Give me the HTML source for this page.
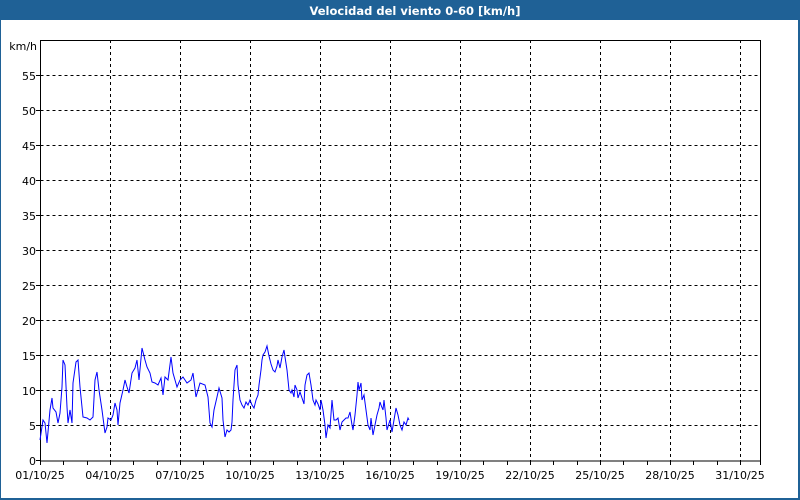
<!DOCTYPE html>
<html><head><style>
html,body{margin:0;padding:0;width:800px;height:500px;overflow:hidden;background:#fff}
svg{display:block}
text{font-family:"DejaVu Sans","Liberation Sans",sans-serif;font-size:11px;fill:#000}
</style></head><body>
<svg width="800" height="500" viewBox="0 0 800 500" xmlns="http://www.w3.org/2000/svg">
<rect x="0" y="0" width="800" height="500" fill="#1f6196"/>
<rect x="1" y="20" width="797" height="478" fill="#fff"/>
<text x="415" y="15" text-anchor="middle" style="font-weight:bold;fill:#fff;font-size:11.5px">Velocidad del viento 0-60 [km/h]</text>
<g stroke="#000" stroke-width="1" stroke-dasharray="3,3" fill="none" shape-rendering="crispEdges">
<path d="M40.5 75.5H760M40.5 110.5H760M40.5 145.5H760M40.5 180.5H760M40.5 215.5H760M40.5 250.5H760M40.5 285.5H760M40.5 320.5H760M40.5 355.5H760M40.5 390.5H760M40.5 425.5H760"/>
<path d="M110.5 40V461M180.5 40V461M250.5 40V461M320.5 40V461M390.5 40V461M460.5 40V461M530.5 40V461M600.5 40V461M670.5 40V461M740.5 40V461"/>
</g>
<rect x="40.5" y="40.5" width="720" height="420.5" fill="none" stroke="#000" stroke-width="1" shape-rendering="crispEdges"/>
<g stroke="#000" shape-rendering="crispEdges">
<path d="M40.5 461v4M63.5 461v4M87.5 461v4M110.5 461v4M133.5 461v4M157.5 461v4M180.5 461v4M203.5 461v4M227.5 461v4M250.5 461v4M273.5 461v4M297.5 461v4M320.5 461v4M343.5 461v4M367.5 461v4M390.5 461v4M413.5 461v4M437.5 461v4M460.5 461v4M483.5 461v4M507.5 461v4M530.5 461v4M553.5 461v4M577.5 461v4M600.5 461v4M623.5 461v4M647.5 461v4M670.5 461v4M693.5 461v4M717.5 461v4M740.5 461v4M760.5 461v4"/>
<path d="M36 75.5h4M36 110.5h4M36 145.5h4M36 180.5h4M36 215.5h4M36 250.5h4M36 285.5h4M36 320.5h4M36 355.5h4M36 390.5h4M36 425.5h4M36 460.5h4"/>
</g>
<g text-anchor="end">
<text x="37" y="50">km/h</text>
<text x="36" y="80">55</text><text x="36" y="115">50</text><text x="36" y="150">45</text>
<text x="36" y="185">40</text><text x="36" y="220">35</text><text x="36" y="255">30</text>
<text x="36" y="290">25</text><text x="36" y="325">20</text><text x="36" y="360">15</text>
<text x="36" y="395">10</text><text x="36" y="430">5</text><text x="36" y="465">0</text>
</g>
<g text-anchor="middle">
<text x="40" y="479">01/10/25</text><text x="110" y="479">04/10/25</text><text x="180" y="479">07/10/25</text>
<text x="250" y="479">10/10/25</text><text x="320" y="479">13/10/25</text><text x="390" y="479">16/10/25</text>
<text x="460" y="479">19/10/25</text><text x="530" y="479">22/10/25</text><text x="600" y="479">25/10/25</text>
<text x="670" y="479">28/10/25</text><text x="740" y="479">31/10/25</text>
</g>
<polyline fill="none" stroke="#0000ff" stroke-width="1" points="40,440 43,420 45,423 47,443 50,410 52,398 53,408 56,412 58,423 60,413 62,387 63,360 65,365 67,407 68,423 70,410 72,423 73,383 76,362 78,360 80,387 83,417 87,418 90,420 93,417 95,380 97,372 99,390 102,410 105,433 107,427 108,418 111,420 113,415 115,403 117,410 118,425 120,403 123,390 125,380 127,387 129,393 132,373 135,368 137,360 139,380 142,348 145,360 147,367 150,373 152,382 155,383 158,385 161,378 163,395 165,377 168,380 171,357 173,373 177,387 180,380 183,377 187,383 191,380 193,373 196,397 198,390 200,383 205,385 208,397 210,423 212,427 214,410 217,397 219,388 222,398 223,420 225,437 227,430 229,432 231,430 232,422 233,400 235,370 237,365 238,385 240,400 242,405 244,408 246,402 248,405 250,400 252,405 254,408 256,400 258,395 259,385 261,370 262,360 263,355 265,352 267,346 269,356 271,364 273,370 275,372 277,366 278,360 280,368 282,357 284,350 285,357 287,370 289,390 291,393 292,390 294,397 295,385 297,390 298,398 300,392 302,398 304,404 305,385 307,375 309,373 311,385 313,400 315,405 316,400 318,404 320,410 321,400 323,410 325,425 326,438 328,425 330,428 332,400 334,420 336,420 338,418 340,430 342,422 344,420 346,418 348,418 350,412 352,425 353,430 355,415 357,395 358,382 359,390 361,383 362,400 364,395 366,410 368,425 370,430 371,418 373,435 375,425 377,415 379,408 380,402 381,405 383,410 384,400 386,418 387,430 390,420 392,432 394,420 396,408 398,415 400,425 402,430 404,422 406,425 408,418 409,420"/>
</svg>
</body></html>
